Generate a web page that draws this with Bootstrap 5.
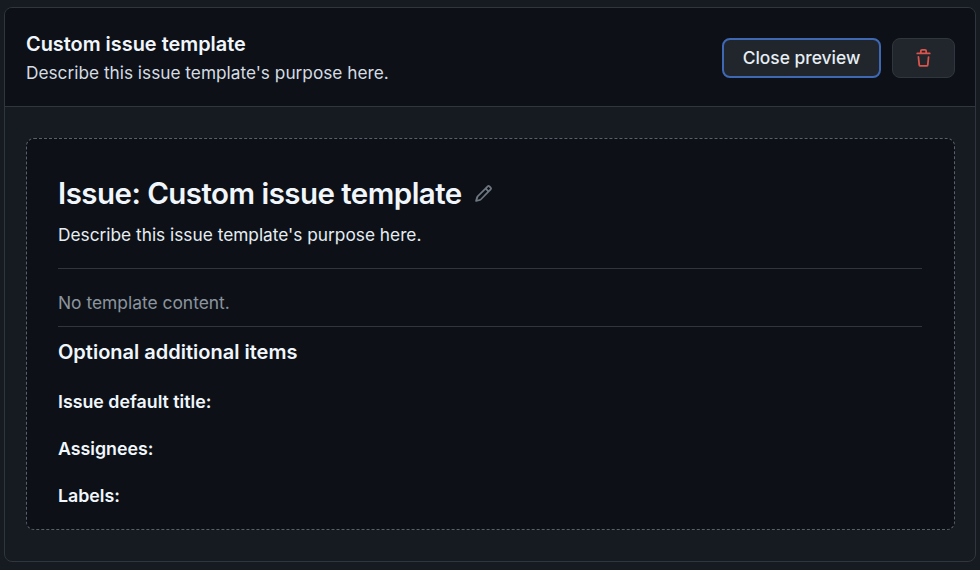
<!DOCTYPE html>
<html lang="en">
<head>
  <meta charset="UTF-8" />
  <meta name="viewport" content="width=device-width, initial-scale=1" />
  <title>Custom issue template</title>
  <link href="https://cdn.jsdelivr.net/npm/bootstrap@5.3.0/dist/css/bootstrap.min.css" rel="stylesheet" />
  <style>
    body {
      background-color: #161b22;
      color: #e6edf3;
      font-family: Inter, 'Liberation Sans', sans-serif;
      padding: 7px 4px 8px 4px;
      height: 570px;
      overflow: hidden;
    }
    #templateBox {
      height: 555px;
      background-color: #161b22;
      border: 1px solid #30363d;
      border-radius: 8px;
      overflow: hidden;
    }
    #templateHead {
      height: 99px;
      background-color: #0d1117;
      border-bottom: 1px solid #30363d;
      padding: 2px 20px 0 21px;
    }
    #templateHead h1 {
      font-size: 19.9px;
      font-weight: 600;
      line-height: 26px;
      margin: 0;
      color: #f0f6fc;
    }
    #templateHead p {
      font-size: 17.25px;
      line-height: 26px;
      margin: 3px 0 0;
      color: #d5dce3;
    }
    #headActions { gap: 11px; }
    #closeBtn {
      width: 159px;
      height: 40px;
      padding: 0;
      font-size: 17.4px;
      font-weight: 500;
      color: #e6edf3;
      background-color: #21262d;
      border: 2px solid #3f68b4;
      border-radius: 8px;
    }
    #trashBtn {
      width: 63px;
      height: 40px;
      padding: 0;
      background-color: #21262d;
      border: 1px solid #30363d;
      border-radius: 8px;
    }
    #trashBtn svg { fill: #d9544d; }
    #previewBox {
      margin: 31px 20px 0 21px;
      height: 392px;
      background-color: #0d1117;
      border: 1px dashed #59606a;
      border-radius: 8px;
      padding: 34px 32px 0 31px;
    }
    #previewBox h2 {
      font-size: 29.5px;
      font-weight: 600;
      letter-spacing: -0.54px;
      line-height: 40px;
      margin: 0;
      color: #f0f6fc;
    }
    #editIcon { fill: #6e7681; }
    .intro-text {
      font-size: 17.3px;
      line-height: 26px;
      margin: 9px 0 20px;
      color: #e6edf3;
    }
    .rule-line {
      border-top: 1px solid #30363d;
    }
    .empty-text {
      font-size: 17.4px;
      line-height: 26px;
      padding: 21px 0 10px;
      margin: 0;
      color: #8b949e;
    }
    #previewBox h3 {
      font-size: 20px;
      font-weight: 600;
      line-height: 26px;
      margin: 12px 0 24px;
      color: #f0f6fc;
    }
    .opt-label {
      font-size: 17.8px;
      font-weight: 600;
      line-height: 26px;
      margin: 0 0 21px;
      color: #f0f6fc;
    }
  </style>
</head>
<body>
  <div id="templateBox">
    <div id="templateHead" class="d-flex align-items-center justify-content-between">
      <div>
        <h1>Custom issue template</h1>
        <p>Describe this issue template's purpose here.</p>
      </div>
      <div id="headActions" class="d-flex">
        <button id="closeBtn" type="button" class="btn">Close preview</button>
        <button id="trashBtn" type="button" class="btn d-flex align-items-center justify-content-center">
          <svg width="19" height="19" viewBox="0 0 16 16"><path d="M11 1.75V3h2.25a.75.75 0 0 1 0 1.5H2.75a.75.75 0 0 1 0-1.5H5V1.75C5 .784 5.784 0 6.75 0h2.5C10.216 0 11 .784 11 1.75ZM4.496 6.675l.66 6.6a.25.25 0 0 0 .249.225h5.19a.25.25 0 0 0 .249-.225l.66-6.6a.75.75 0 0 1 1.492.149l-.66 6.6A1.748 1.748 0 0 1 10.595 15h-5.19a1.75 1.75 0 0 1-1.741-1.575l-.66-6.6a.75.75 0 1 1 1.492-.15ZM6.5 1.75V3h3V1.75a.25.25 0 0 0-.25-.25h-2.5a.25.25 0 0 0-.25.25Z"/></svg>
        </button>
      </div>
    </div>
    <div id="previewBox">
      <div class="d-flex align-items-center gap-2">
        <h2>Issue: Custom issue template</h2>
        <svg id="editIcon" class="ms-1" width="19" height="19" viewBox="0 0 16 16"><path d="M11.013 1.427a1.75 1.75 0 0 1 2.474 0l1.086 1.086a1.75 1.75 0 0 1 0 2.474l-8.61 8.61c-.21.21-.47.364-.756.445l-3.251.93a.75.75 0 0 1-.927-.928l.929-3.25c.081-.286.235-.547.445-.758l8.61-8.61Zm.176 4.823L9.75 4.81l-6 6a.749.749 0 0 0-.19.324l-.62 2.17 2.17-.62a.749.749 0 0 0 .324-.19Zm1.238-3.763a.25.25 0 0 0-.354 0L10.811 3.75l1.439 1.44 1.263-1.263a.25.25 0 0 0 0-.354Z"/></svg>
      </div>
      <p class="intro-text">Describe this issue template's purpose here.</p>
      <div class="rule-line"></div>
      <p class="empty-text">No template content.</p>
      <div class="rule-line"></div>
      <h3>Optional additional items</h3>
      <p class="opt-label">Issue default title:</p>
      <p class="opt-label">Assignees:</p>
      <p class="opt-label">Labels:</p>
    </div>
  </div>
  <script src="https://cdn.jsdelivr.net/npm/bootstrap@5.3.0/dist/js/bootstrap.bundle.min.js"></script>
</body>
</html>
